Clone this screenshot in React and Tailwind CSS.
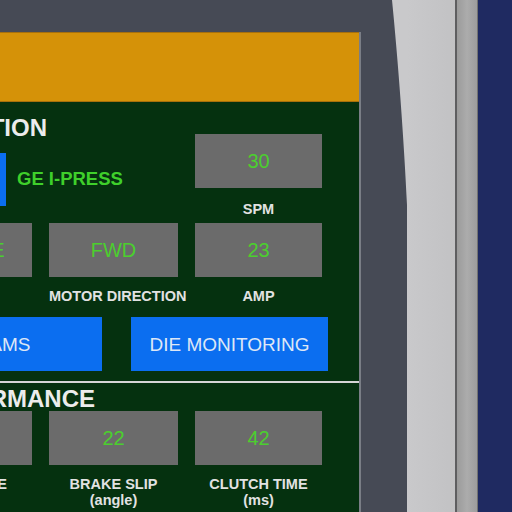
import React from 'react';

const font = { fontFamily: '"Liberation Sans", Arial, sans-serif' };

// grey read-out box with a green value
const ValueBox = ({ value }) => (
  <div className="h-[54px] bg-[#6b6b6b] flex items-center justify-center text-[20px] leading-none text-[#4bcf2e]">
    {value}
  </div>
);

const Label = ({ children }) => (
  <div className="mt-[11px] text-center text-[14.5px] leading-[16px] font-bold text-[#e2e2e2] whitespace-nowrap">
    {children}
  </div>
);

const Cell = ({ value, label, sub }) => (
  <div className="flex flex-col">
    <ValueBox value={value} />
    <Label>
      {label}
      {sub && <br />}
      {sub}
    </Label>
  </div>
);

const Screen = () => (
  <div className="flex-1 bg-[#05310f] overflow-hidden">
    <div className="ml-[-96px] w-[455px] flex flex-col">
      {/* top section */}
      <div className="h-[121px] flex">
        <div className="w-[291px] flex flex-col">
          <div className="mt-[14px] w-[143px] h-[24px] flex justify-end whitespace-nowrap text-[24px] leading-[24px] font-bold text-[#ececec]">
            PRESS INFORMATION
          </div>
          <div className="mt-[13px] flex items-center">
            <div className="w-[102px] h-[53px] bg-[#0b6ef0]" />
            <div className="ml-[11px] text-[18.5px] leading-none font-bold text-[#3fd02b]">GE I-PRESS</div>
          </div>
        </div>
        <div className="w-[127px] flex flex-col">
          <div className="mt-[32px]">
            <ValueBox value="30" />
          </div>
          <div className="mt-[13px] text-center text-[14.5px] leading-[16px] font-bold text-[#e2e2e2]">SPM</div>
        </div>
      </div>

      {/* second row */}
      <div className="grid grid-cols-[128px_129px_127px] gap-x-[17px]">
        <Cell value="SINGLE" label="MODE" />
        <Cell value="FWD" label="MOTOR DIRECTION" />
        <Cell value="23" label="AMP" />
      </div>

      {/* buttons */}
      <div className="mt-[13px] flex">
        <div className="ml-[-56px] w-[254px] h-[54px] bg-[#0b6ef0] flex items-center justify-center text-[19px] leading-none text-[#dde7f6]">
          PROGRAMS
        </div>
        <div className="ml-[29px] w-[197px] h-[54px] bg-[#0b6ef0] flex items-center justify-center text-[19px] leading-none text-[#dde7f6] whitespace-nowrap">
          DIE MONITORING
        </div>
      </div>

      <div className="mt-[10px] h-[2px] bg-[#d6d6d6]" />

      <div className="mt-[4px] w-[191px] h-[24px] flex justify-end whitespace-nowrap text-[24px] leading-[24px] font-bold text-[#ececec]">
        PERFORMANCE
      </div>

      <div className="grid grid-cols-[128px_129px_127px] gap-x-[17px]">
        <Cell value="180" label="STOP TIME" sub="(ms)" />
        <Cell value="22" label="BRAKE SLIP" sub="(angle)" />
        <Cell value="42" label="CLUTCH TIME" sub="(ms)" />
      </div>
    </div>
  </div>
);

export default function App() {
  return (
    <div className="w-[512px] h-[512px] flex overflow-hidden bg-[#464a55]" style={font}>
      <div className="w-[361px] flex flex-col pt-[32px]">
        <div className="flex-1 flex flex-col border-r-2 border-[#7a7e86] overflow-hidden">
          <div className="h-[70px] bg-[#d59208] border-t border-b border-[#a8700c]" />
          <Screen />
        </div>
      </div>

      {/* bezel curve */}
      <div className="w-[46px]">
        <svg width="46" height="512" viewBox="0 0 46 512" className="block">
          <path d="M31 0 C37 60 43 140 46 205 L46 512 L46 0 Z" fill="#c9c9cb" />
        </svg>
      </div>
      <div className="w-[48px] bg-gradient-to-r from-[#c9c9cb] to-[#c2c2c4]" />
      <div className="w-[2px] bg-[#5e5e60]" />
      <div className="w-[20px] bg-gradient-to-r from-[#9b9b9b] via-[#acacac] to-[#9d9d9d]" />
      <div className="w-[1px] bg-[#727272]" />
      <div className="flex-1 bg-[#1f2a61]" />
    </div>
  );
}
